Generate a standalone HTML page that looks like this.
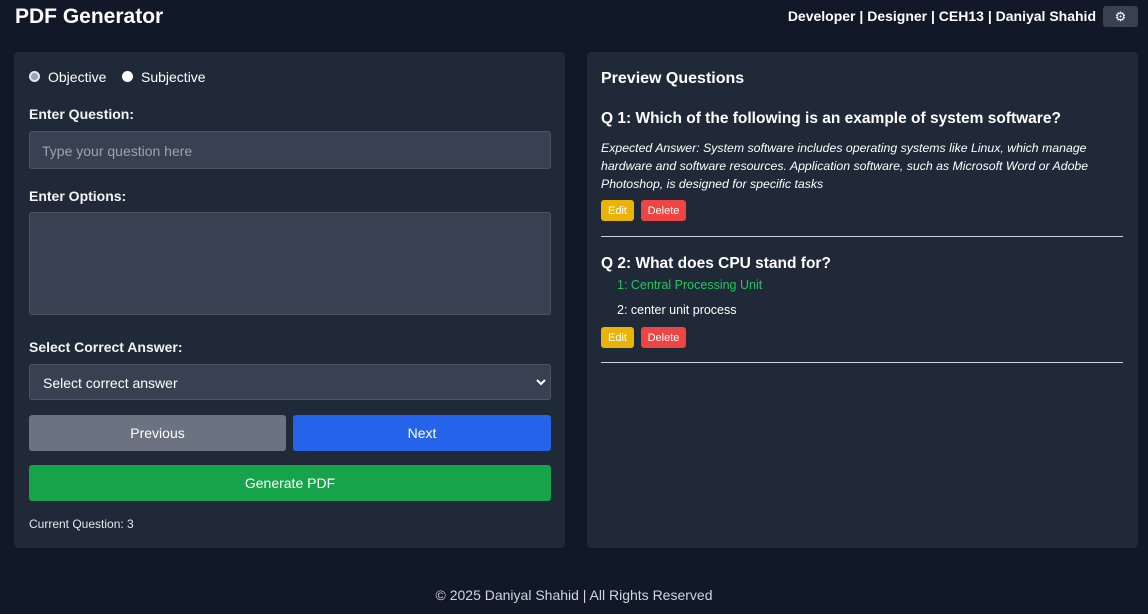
<!DOCTYPE html>
<html><head><meta charset="utf-8"><style>
*{box-sizing:border-box;margin:0;padding:0}
body{width:1148px;height:614px;background:#111827;font-family:"Liberation Sans",sans-serif;color:#fff;position:relative;overflow:hidden}
.a{position:absolute}
.card{position:absolute;background:#1f2937;border-radius:4px}
.lbl{position:absolute;left:29px;font-size:14px;font-weight:bold;color:#f3f4f6}
.inp{position:absolute;left:29px;width:522px;background:#374151;border:1px solid #4b5563;border-radius:3px}
.btn{position:absolute;display:flex;align-items:center;justify-content:center;font-size:14px;border-radius:3px;color:#fff}
.sb{position:absolute;height:21px;display:flex;align-items:center;justify-content:center;font-size:11px;border-radius:3px;color:#fff}
.hr{position:absolute;left:601px;width:522px;height:1px;background:#d1d5db}
</style></head><body>
<div class="a" style="left:15px;top:5px;font-size:21px;font-weight:bold">PDF Generator</div>
<div class="a" style="right:52px;top:8px;font-size:14px;font-weight:bold">Developer | Designer | CEH13 | Daniyal Shahid</div>
<div class="a" style="left:1103px;top:6px;width:35px;height:21px;background:#374151;border-radius:3px;display:flex;align-items:center;justify-content:center;font-size:13px">⚙</div>

<div class="card" style="left:14px;top:52px;width:551px;height:496px"></div>
<div class="card" style="left:587px;top:52px;width:551px;height:496px"></div>

<div class="a" style="left:29px;top:71px;width:11px;height:11px;border-radius:50%;background:#9ca3af;border:2px solid #e5e7eb"></div>
<div class="a" style="left:48px;top:69px;font-size:14px">Objective</div>
<div class="a" style="left:122px;top:71px;width:11px;height:11px;border-radius:50%;background:#fff"></div>
<div class="a" style="left:141px;top:69px;font-size:14px">Subjective</div>

<div class="lbl" style="top:106px">Enter Question:</div>
<div class="inp" style="top:131px;height:38px;padding:11px 12px;font-size:14px;color:#9ca3af">Type your question here</div>
<div class="lbl" style="top:188px">Enter Options:</div>
<div class="inp" style="top:212px;height:103px"></div>
<div class="lbl" style="top:339px">Select Correct Answer:</div>
<div class="inp" style="top:364px;height:36px;padding:10px 13px;font-size:14px;color:#fff">Select correct answer<svg style="position:absolute;right:4px;top:13px" width="10" height="8" viewBox="0 0 10 8"><path d="M1 2 L5 6 L9 2" stroke="#fff" stroke-width="2" fill="none"/></svg></div>
<div class="btn" style="left:29px;top:415px;width:257px;height:36px;background:#6b7280">Previous</div>
<div class="btn" style="left:293px;top:415px;width:258px;height:36px;background:#2563eb">Next</div>
<div class="btn" style="left:29px;top:465px;width:522px;height:36px;background:#16a34a">Generate PDF</div>
<div class="a" style="left:29px;top:517px;font-size:12px;color:#e5e7eb">Current Question: 3</div>

<div class="a" style="left:601px;top:70px;font-size:16px;font-weight:bold">Preview Questions</div>
<div class="a" style="left:601px;top:110px;font-size:15.5px;font-weight:bold">Q 1: Which of the following is an example of system software?</div>
<div class="a" style="left:601px;top:139px;width:500px;font-size:12.3px;font-style:italic;line-height:18px">Expected Answer: System software includes operating systems like Linux, which manage hardware and software resources. Application software, such as Microsoft Word or Adobe Photoshop, is designed for specific tasks</div>
<div class="sb" style="left:601px;top:200px;width:33px;background:#eab308">Edit</div>
<div class="sb" style="left:641px;top:200px;width:45px;background:#ef4444">Delete</div>
<div class="hr" style="top:236px"></div>
<div class="a" style="left:601px;top:255px;font-size:15.5px;font-weight:bold">Q 2: What does CPU stand for?</div>
<div class="a" style="left:617px;top:278px;font-size:12.5px;color:#22c55e">1: Central Processing Unit</div>
<div class="a" style="left:617px;top:303px;font-size:12.5px">2: center unit process</div>
<div class="sb" style="left:601px;top:327px;width:33px;background:#eab308">Edit</div>
<div class="sb" style="left:641px;top:327px;width:45px;background:#ef4444">Delete</div>
<div class="hr" style="top:362px"></div>

<div class="a" style="left:0;width:1148px;top:587px;text-align:center;font-size:14px;color:#d1d5db">© 2025 Daniyal Shahid | All Rights Reserved</div>
</body></html>
